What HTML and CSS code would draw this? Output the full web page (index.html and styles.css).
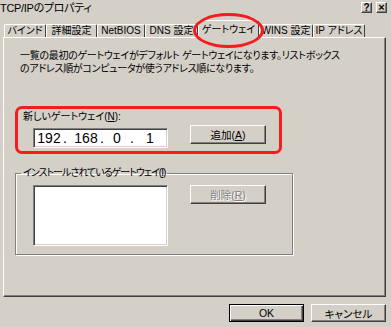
FILE: index.html
```html
<!DOCTYPE html>
<html lang="ja">
<head>
    <meta charset="UTF-8">
    <title>TCP/IPのプロパティ</title>
    <link rel="stylesheet" href="styles.css">
</head>
<body>
    <div class="window">
        <div class="titlebar">
            <span class="title">TCP/IPのプロパティ</span>
            <div class="caption-btns">
                <span class="cap-btn">?</span>
                <span class="cap-btn close">×</span>
            </div>
        </div>
        <div class="tabs">
            <div class="tab w1">バインド</div>
            <div class="tab w2">詳細設定</div>
            <div class="tab w3">NetBIOS</div>
            <div class="tab w4">DNS 設定</div>
            <div class="tab on">ゲートウェイ<span class="mark-ellipse"></span></div>
            <div class="tab w5">WINS 設定</div>
            <div class="tab w6">IP アドレス</div>
        </div>
        <div class="panel">
            <p class="desc">一覧の最初のゲートウェイがデフォルト ゲートウェイになります。リストボックス<br>のアドレス順がコンピュータが使うアドレス順になります。</p>
            <div class="mark-box">
                <div class="label">新しいゲートウェイ(<u>N</u>):</div>
                <div class="row">
                    <div class="ipbox">
                        <span class="oct o1">192</span><span class="dot">.</span><span class="gap"></span>
                        <span class="oct o2">168</span><span class="dot">.</span>
                        <span class="oct o3">0</span><span class="dot">.</span>
                        <span class="oct o4">1</span>
                    </div>
                    <button class="btn add">追加(<u>A</u>)</button>
                </div>
            </div>
            <fieldset class="group">
                <legend>インストールされているゲートウェイ(<u>I</u>)</legend>
                <div class="row">
                    <div class="listbox"></div>
                    <button class="btn disabled">削除(<u>R</u>)</button>
                </div>
            </fieldset>
        </div>
        <div class="footer">
            <button class="btn default">OK</button>
            <button class="btn">キャンセル</button>
        </div>
    </div>
</body>
</html>
```

FILE: styles.css
```css
* {
    margin: 0;
    padding: 0;
    box-sizing: border-box;
}
body {
    background: #d4d0c8;
    font-family: "Liberation Sans", "Noto Sans CJK JP", sans-serif;
    font-feature-settings: "palt";
    color: #000;
}
.window {
    width: 391px;
    height: 327px;
    background: #d4d0c8;
}
u {
    text-decoration: underline;
}

/* タイトル */
.titlebar {
    height: 20px;
    display: flex;
    align-items: flex-start;
}
.title {
    font-size: 11px;
    line-height: 14px;
    padding-top: 1px;
    letter-spacing: -0.3px;
}
.caption-btns {
    margin-left: auto;
    margin-right: 4px;
    margin-top: 2px;
    display: flex;
    gap: 4px;
}
.cap-btn {
    width: 11px;
    height: 11px;
    font-size: 10px;
    line-height: 9px;
    font-weight: bold;
    text-align: center;
    border: 1px solid;
    border-color: #fff #404040 #404040 #fff;
    box-shadow: inset -1px -1px #808080;
}
.cap-btn.close {
    font-size: 11px;
}

/* タブ */
.tabs {
    height: 17px;
    padding-left: 4px;
    display: flex;
    align-items: flex-end;
    position: relative;
    z-index: 1;
}
.tab {
    height: 13px;
    font-size: 10px;
    line-height: 11px;
    text-align: center;
    white-space: nowrap;
    background: #d4d0c8;
    border: 1px solid;
    border-bottom: none;
    border-color: #fff #404040 #fff #fff;
    border-radius: 2px 2px 0 0;
}
.w1 { width: 42px; }
.w2 { width: 51px; }
.w3 { width: 48px; }
.w4 { width: 53px; }
.w5 { width: 54px; }
.w6 { width: 52px; }
.tab.on {
    width: 61px;
    height: 18px;
    margin-bottom: -1px;
    line-height: 17px;
    position: relative;
}
.mark-ellipse {
    position: absolute;
    left: -6px;
    top: -8px;
    width: 71px;
    height: 35px;
    border: 3px solid #f41c1c;
    border-radius: 50%;
}

/* パネル */
.panel {
    margin-left: 3px;
    width: 383px;
    height: 260px;
    border: 1px solid;
    border-color: #fff #404040 #404040 #fff;
    box-shadow: inset -1px -1px #808080;
}
.desc {
    margin: 11px 0 0 16px;
    font-size: 10px;
    line-height: 13px;
    letter-spacing: -0.3px;
}
.mark-box {
    margin: 31px 0 0 11px;
    width: 267px;
    height: 48px;
    border: 3px solid #f41c1c;
    border-radius: 7px;
    padding-left: 5px;
}
.label {
    font-size: 10px;
    line-height: 13px;
    margin-top: 1px;
}
.row {
    display: flex;
    align-items: flex-start;
}
.mark-box .row {
    margin: 5px 0 0 10px;
}
.ipbox {
    width: 135px;
    height: 20px;
    background: #fff;
    border: 1px solid;
    border-color: #808080 #fff #fff #808080;
    box-shadow: inset 1px 1px #404040, inset -1px -1px #d4d0c8;
    display: flex;
    align-items: center;
    padding-left: 3px;
    font-size: 14px;
}
.oct, .dot {
    text-align: center;
}
.o1, .o2 { width: 24px; }
.o3 { width: 22px; }
.o4 { width: 28px; }
.dot { width: 8px; }
.gap { width: 5px; }
.btn {
    width: 76px;
    height: 19px;
    background: #d4d0c8;
    font-family: "Liberation Sans", "Noto Sans CJK JP", sans-serif;
    font-feature-settings: "palt";
    font-size: 10.5px;
    color: #000;
    border: 1px solid;
    border-color: #fff #404040 #404040 #fff;
    box-shadow: inset -1px -1px #808080;
}
.add {
    margin: -3px 0 0 22px;
}
.group {
    margin: 13px 0 0 11px;
    width: 278px;
    height: 88px;
    border: 1px solid #808080;
    box-shadow: inset 1px 1px #fff, 1px 1px #fff;
}
.group legend {
    margin-left: 5px;
    padding: 0 2px;
    font-size: 10px;
    line-height: 12px;
    letter-spacing: -1px;
}
.group .row {
    margin: 6px 0 0 17px;
}
.listbox {
    width: 135px;
    height: 61px;
    background: #fff;
    border: 1px solid;
    border-color: #808080 #fff #fff #808080;
    box-shadow: inset 1px 1px #404040, inset -1px -1px #d4d0c8;
}
.group .btn {
    margin-left: 22px;
}
.btn.disabled {
    color: #808080;
    text-shadow: 1px 1px #fff;
}

/* フッター */
.footer {
    display: flex;
    justify-content: flex-end;
    gap: 7px;
    margin-top: 7px;
    padding-right: 5px;
}
.footer .btn {
    width: 75px;
    height: 18px;
}
.btn.default {
    border: 1px solid #000;
    box-shadow: inset 1px 1px #fff, inset -1px -1px #404040, inset -2px -2px #808080;
}
```
